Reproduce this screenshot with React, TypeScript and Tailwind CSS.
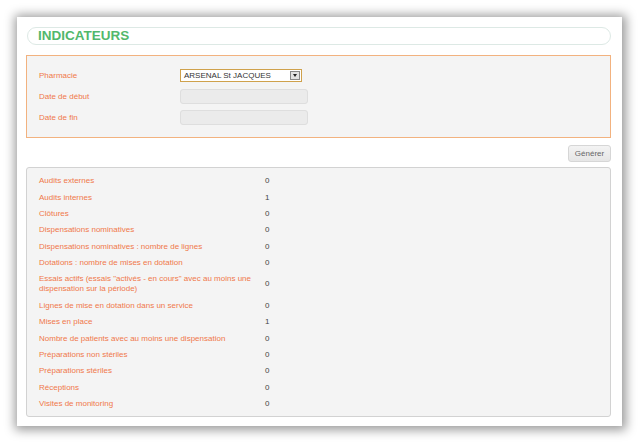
const rows: { label: React.ReactNode; value: number }[] = [
  { label: "Audits externes", value: 0 },
  { label: "Audits internes", value: 1 },
  { label: "Clôtures", value: 0 },
  { label: "Dispensations nominatives", value: 0 },
  { label: "Dispensations nominatives : nombre de lignes", value: 0 },
  { label: "Dotations : nombre de mises en dotation", value: 0 },
  {
    label: (
      <>
        Essais actifs (essais "activés - en cours" avec au moins une
        <br />
        dispensation sur la période)
      </>
    ),
    value: 0,
  },
  { label: "Lignes de mise en dotation dans un service", value: 0 },
  { label: "Mises en place", value: 1 },
  { label: "Nombre de patients avec au moins une dispensation", value: 0 },
  { label: "Préparations non stériles", value: 0 },
  { label: "Préparations stériles", value: 0 },
  { label: "Réceptions", value: 0 },
  { label: "Visites de monitoring", value: 0 },
];

export default function App() {
  return (
    <div className="w-[639px] h-[444px] bg-white pt-[17px] pl-[17px] font-['Liberation_Sans',Arial,sans-serif]">
      <div className="w-[605px] h-[409px] bg-white shadow-[1px_1px_10px_3px_rgba(0,0,0,0.4)] pt-[10px] pl-[9px] pr-[11px]">
        {/* titre */}
        <div className="ml-[1px] h-[18px] rounded-full border border-[#dde9e5] pl-[10px] flex items-center">
          <h1 className="text-[13.5px] font-bold text-[#52b86c] leading-none">INDICATEURS</h1>
        </div>

        {/* filtres */}
        <div className="mt-[10px] border border-[#f2b27f] bg-[#f4f4f4] pl-[12px] py-[9px]">
          <div className="h-[21px] flex items-center">
            <span className="w-[141px] text-[8px] text-[#f0784a]">Pharmacie</span>
            <div className="w-[122px] h-[13px] border border-[#cfa14c] bg-white flex items-center justify-between pl-[3px] pr-[1px]">
              <span className="text-[8px] text-[#333] leading-none">ARSENAL St JACQUES</span>
              <span className="w-[10px] h-[9px] bg-[#e2e2e2] border border-[#888] flex items-center justify-center">
                <span className="w-0 h-0 border-l-[2.5px] border-r-[2.5px] border-t-[3px] border-l-transparent border-r-transparent border-t-[#222]" />
              </span>
            </div>
          </div>
          <div className="h-[21px] flex items-center">
            <span className="w-[141px] text-[8px] text-[#f0784a]">Date de début</span>
            <div className="w-[128px] h-[15px] rounded-[3px] border border-[#dedede] bg-[#ebebeb]" />
          </div>
          <div className="h-[21px] flex items-center">
            <span className="w-[141px] text-[8px] text-[#f0784a]">Date de fin</span>
            <div className="w-[128px] h-[15px] rounded-[3px] border border-[#dedede] bg-[#ebebeb]" />
          </div>
        </div>

        <div className="mt-[7px] flex justify-end">
          <button className="w-[43px] h-[17px] rounded-[3px] border border-[#d6d6d6] bg-gradient-to-b from-[#f3f3f3] to-[#e6e6e6] text-[8px] text-[#666] leading-none">
            Générer
          </button>
        </div>

        {/* résultats */}
        <div className="mt-[5px] h-[250px] rounded-[3px] border border-[#d2d2d2] bg-[#f4f4f4] pl-[12px] pt-[5px]">
          {rows.map((r, i) => (
            <div key={i} className="flex items-center py-[3.2px]">
              <span className="w-[226px] text-[8px] leading-[10px] text-[#f0784a]">{r.label}</span>
              <span className="text-[8px] leading-[10px] text-[#444]">{r.value}</span>
            </div>
          ))}
        </div>
      </div>
    </div>
  );
}
